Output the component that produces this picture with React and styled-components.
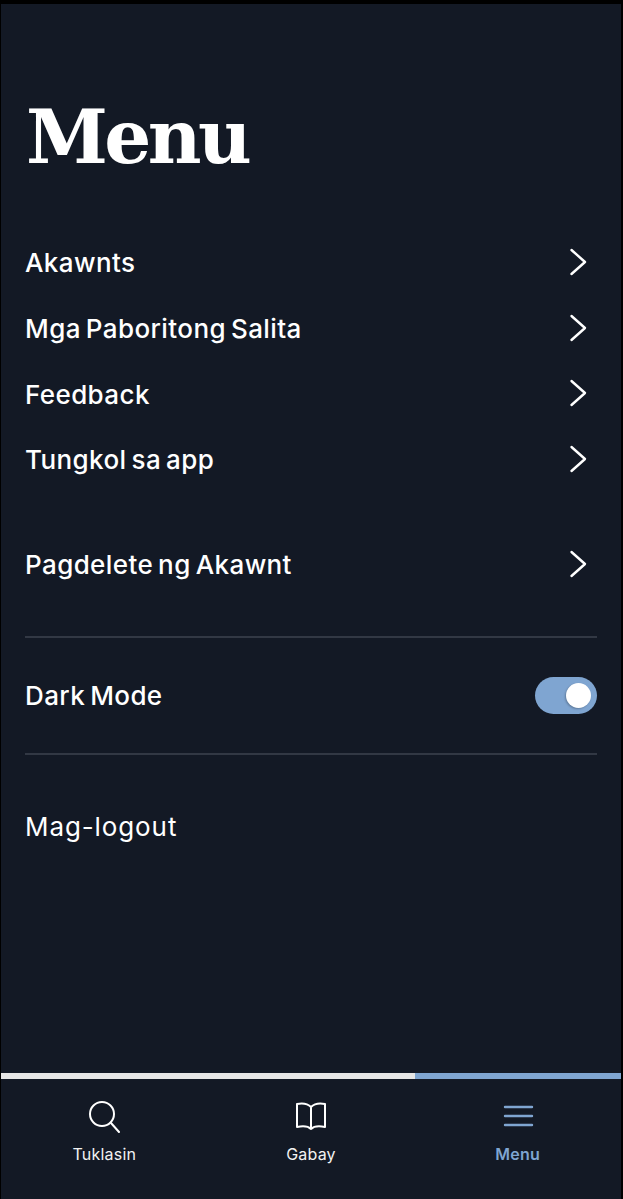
import React from "react";
import styled, { createGlobalStyle } from "styled-components";

const Global = createGlobalStyle`
  html, body { margin: 0; padding: 0; background: #000; }
  #root { width: 623px; height: 1199px; }
`;
const Frame = styled.div`
  width: 623px; height: 1199px; box-sizing: border-box; padding: 4px 2px 0 1px;
  background: #000;
`;
const Screen = styled.div`
  height: 1195px; background: #131925; display: flex; flex-direction: column;
  font-family: Inter, "Liberation Sans", sans-serif; color: #fff; overflow: hidden;
`;
const Content = styled.main`
  flex: 1; display: flex; flex-direction: column; padding: 0 24px;
`;
const Title = styled.h1`
  margin: 90px 0 0; height: 86px; line-height: 86px; font-family: "DejaVu Serif", serif;
  font-weight: 700; font-size: 74px; letter-spacing: -3.6px; color: #fff;
  padding-left: 1px;
`;
const List = styled.div`
  display: flex; flex-direction: column; margin-top: ${p => p.$top}px;
`;
const Row = styled.div`
  height: 65.7px; display: flex; align-items: center; justify-content: space-between;
  font-size: 26px; font-weight: 500; letter-spacing: 0.4px; word-spacing: -2.3px;
`;
const Chevron = styled.svg`
  width: 20px; height: 32px; margin: 0 9px 2px 0; fill: none; stroke: #fff; stroke-width: 2.4;
  stroke-linecap: round; stroke-linejoin: round;
`;
const Divider = styled.hr`
  margin: ${p => p.$top}px 0 0; border: 0; height: 2px; background: #323844;
`;
const ToggleRow = styled(Row)`height: 115px;`;
const Toggle = styled.div`
  width: 62px; height: 37px; border-radius: 19px; background: #7fa5d1;
  display: flex; align-items: center; justify-content: flex-end; padding-right: 6px; box-sizing: border-box;
`;
const Knob = styled.div`
  width: 25px; height: 25px; border-radius: 50%; background: #fff; box-shadow: -1px 1px 2px rgba(0,0,0,.25);
`;
const Logout = styled.div`
  margin-top: 54px; font-size: 26px; font-weight: 400; line-height: 36px; letter-spacing: 0.9px;
`;
const Progress = styled.div`
  height: 6px; display: flex; background: #7fa5d1;
`;
const ProgressFill = styled.div`
  width: 414px; background: #e6e6e6;
`;
const Nav = styled.nav`
  height: 120px; display: grid; grid-template-columns: repeat(3, 1fr);
`;
const NavItem = styled.div`
  display: flex; flex-direction: column; align-items: center; padding-top: 20px;
  color: ${p => (p.$active ? "#7fa5d1" : "#f2f2f2")};
  font-size: 16px; font-weight: ${p => (p.$active ? 600 : 400)};
`;
const NavIcon = styled.svg`
  width: 34px; height: 34px; fill: none; stroke: ${p => (p.$active ? "#7fa5d1" : "#fff")};
  stroke-width: ${p => (p.$active ? 2.4 : 2)}; stroke-linecap: round; stroke-linejoin: round;
`;
const NavLabel = styled.span`
  margin-top: 10px; line-height: 22px; letter-spacing: 0.2px;
`;

const Arrow = () => (
  <Chevron viewBox="0 0 20 32"><path d="M3.5 4 L17 16 L3.5 28" /></Chevron>
);

const rows = ["Akawnts", "Mga Paboritong Salita", "Feedback", "Tungkol sa app"];

export default function App() {
  return (
    <>
      <Global />
      <Frame>
        <Screen>
          <Content>
            <Title>Menu</Title>
            <List $top={50}>
              {rows.map(r => <Row key={r}>{r}<Arrow /></Row>)}
            </List>
            <List $top={39}>
              <Row>Pagdelete ng Akawnt<Arrow /></Row>
            </List>
            <Divider $top={39} />
            <ToggleRow>Dark Mode<Toggle><Knob /></Toggle></ToggleRow>
            <Divider $top={0} />
            <Logout>Mag-logout</Logout>
          </Content>
          <Progress><ProgressFill /></Progress>
          <Nav>
            <NavItem>
              <NavIcon viewBox="0 0 34 34"><circle cx="15" cy="15" r="12" /><path d="M24 24 L32 33" /></NavIcon>
              <NavLabel>Tuklasin</NavLabel>
            </NavItem>
            <NavItem>
              <NavIcon viewBox="0 0 34 34"><path d="M17 8 C14 5 8 4 3 5 V28 C8 27 14 27 17 30 C20 27 26 27 31 28 V5 C26 4 20 5 17 8 Z M17 8 V30" /></NavIcon>
              <NavLabel>Gabay</NavLabel>
            </NavItem>
            <NavItem $active>
              <NavIcon $active viewBox="0 0 34 34"><path d="M4 8 H31 M4 17 H31 M4 26 H31" /></NavIcon>
              <NavLabel>Menu</NavLabel>
            </NavItem>
          </Nav>
        </Screen>
      </Frame>
    </>
  );
}
